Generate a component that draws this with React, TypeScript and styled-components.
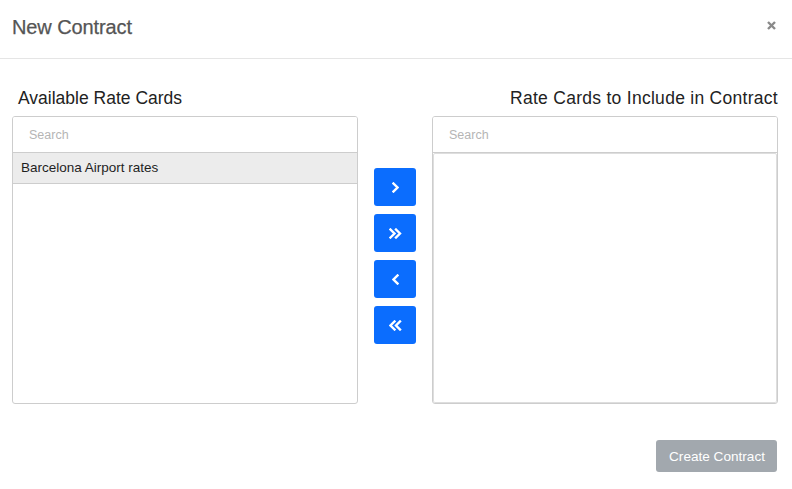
import React from "react";
import styled, { createGlobalStyle } from "styled-components";

const Global = createGlobalStyle`
  html, body { margin: 0; padding: 0; background: #fff; }
  body { font-family: "Liberation Sans", Arial, Helvetica, sans-serif; }
  * { box-sizing: border-box; }
`;

const Modal = styled.div`
  width: 792px;
  height: 489px;
  background: #fff;
  display: flex;
  flex-direction: column;
`;

const Header = styled.div`
  height: 59px;
  border-bottom: 1px solid #e5e5e5;
  display: flex;
  align-items: center;
  justify-content: space-between;
  padding: 0 14px 4px 12px;
`;

const Title = styled.h4`
  margin: 0;
  font-size: 20px;
  font-weight: 400;
  color: #555;
  letter-spacing: -0.1px;
  -webkit-text-stroke: 0.25px #555;
`;

const Close = styled.button`
  border: 0;
  background: transparent;
  padding: 0;
  width: 14px;
  height: 14px;
  display: flex;
  align-items: center;
  justify-content: center;
  margin-top: -4px;
  cursor: pointer;
`;

const Body = styled.div`
  display: grid;
  grid-template-columns: 346px 74px 346px;
  grid-template-rows: auto auto;
  padding: 27px 0 0 12px;
`;

const ColTitle = styled.h5<{ $right?: boolean }>`
  margin: 0 0 6px;
  padding: 0 ${(p) => (p.$right ? "0" : "6px")};
  font-size: 17.5px;
  font-weight: 400;
  line-height: 24px;
  color: #222;
  letter-spacing: ${(p) => (p.$right ? "0.28px" : "0")};
  text-align: ${(p) => (p.$right ? "right" : "left")};
  grid-column: ${(p) => (p.$right ? 3 : 1)};
  grid-row: 1;
  white-space: nowrap;
`;

const Panel = styled.div<{ $col: number }>`
  grid-column: ${(p) => p.$col};
  grid-row: 2;
  height: 288px;
  border: 1px solid #cdcdcd;
  border-radius: 3px;
  display: flex;
  flex-direction: column;
  overflow: hidden;
`;

const Search = styled.input`
  height: 36px;
  flex: none;
  border: 0;
  border-bottom: 1px solid #cdcdcd;
  padding: 0 16px;
  font-family: "Liberation Sans", Arial, sans-serif;
  font-size: 12.5px;
  color: #333;
  outline: none;
  &::placeholder { color: #b5b5b5; }
`;

const List = styled.div<{ $boxed?: boolean }>`
  flex: 1;
  display: flex;
  flex-direction: column;
  border: ${(p) => (p.$boxed ? "1px solid #dedede" : "0")};
  border-radius: ${(p) => (p.$boxed ? "2px" : "0")};
`;

const Item = styled.div<{ $selected?: boolean }>`
  height: 31px;
  display: flex;
  align-items: center;
  padding: 0 8px 1px;
  font-size: 13.5px;
  color: #1f1f1f;
  background: ${(p) => (p.$selected ? "#ececec" : "#fff")};
  border-bottom: 1px solid #cdcdcd;
`;

const Controls = styled.div`
  grid-column: 2;
  grid-row: 2;
  display: flex;
  flex-direction: column;
  align-items: center;
  gap: 8px;
  padding-top: 52px;
  padding-left: 0;
`;

const MoveButton = styled.button`
  width: 42px;
  height: 38px;
  border: 0;
  border-radius: 3px;
  background: #0b6dfe;
  display: flex;
  align-items: center;
  justify-content: center;
  padding: 0;
  cursor: pointer;
`;

const Footer = styled.div`
  display: flex;
  justify-content: flex-end;
  padding: 36px 15px 0 0;
`;

const CreateButton = styled.button`
  height: 32px;
  padding: 0 12px 0 13px;
  border: 0;
  border-radius: 3px;
  background: #a2a8ae;
  color: #fff;
  font-family: "Liberation Sans", Arial, sans-serif;
  font-size: 13.6px;
  cursor: default;
`;

const Chevron = ({ dir, double }: { dir: "left" | "right"; double?: boolean }) => {
  const one = (x: number) =>
    dir === "right"
      ? `M${x} 1.5 L${x + 4} 5.5 L${x} 9.5`
      : `M${x + 4} 1.5 L${x} 5.5 L${x + 4} 9.5`;
  const w = double ? 13 : 7;
  return (
    <svg width={w} height={11} viewBox={`0 0 ${w} 11`}>
      <path
        d={double ? `${one(1.5)} ${one(7)}` : one(1.5)}
        fill="none"
        stroke="#fff"
        strokeWidth={2.4}
        strokeLinecap="square"
        strokeLinejoin="miter"
      />
    </svg>
  );
};

export default function App() {
  return (
    <>
      <Global />
      <Modal>
        <Header>
          <Title>New Contract</Title>
          <Close aria-label="Close">
            <svg width="9" height="9" viewBox="0 0 9 9">
              <path d="M1 1 L8 8 M8 1 L1 8" stroke="#8a8a8a" strokeWidth="2.4" />
            </svg>
          </Close>
        </Header>
        <Body>
          <ColTitle>Available Rate Cards</ColTitle>
          <ColTitle $right>Rate Cards to Include in Contract</ColTitle>
          <Panel $col={1}>
            <Search placeholder="Search" />
            <List>
              <Item $selected>Barcelona Airport rates</Item>
            </List>
          </Panel>
          <Controls>
            <MoveButton aria-label="Add selected">
              <Chevron dir="right" />
            </MoveButton>
            <MoveButton aria-label="Add all">
              <Chevron dir="right" double />
            </MoveButton>
            <MoveButton aria-label="Remove selected">
              <Chevron dir="left" />
            </MoveButton>
            <MoveButton aria-label="Remove all">
              <Chevron dir="left" double />
            </MoveButton>
          </Controls>
          <Panel $col={3}>
            <Search placeholder="Search" />
            <List $boxed />
          </Panel>
        </Body>
        <Footer>
          <CreateButton disabled>Create Contract</CreateButton>
        </Footer>
      </Modal>
    </>
  );
}
